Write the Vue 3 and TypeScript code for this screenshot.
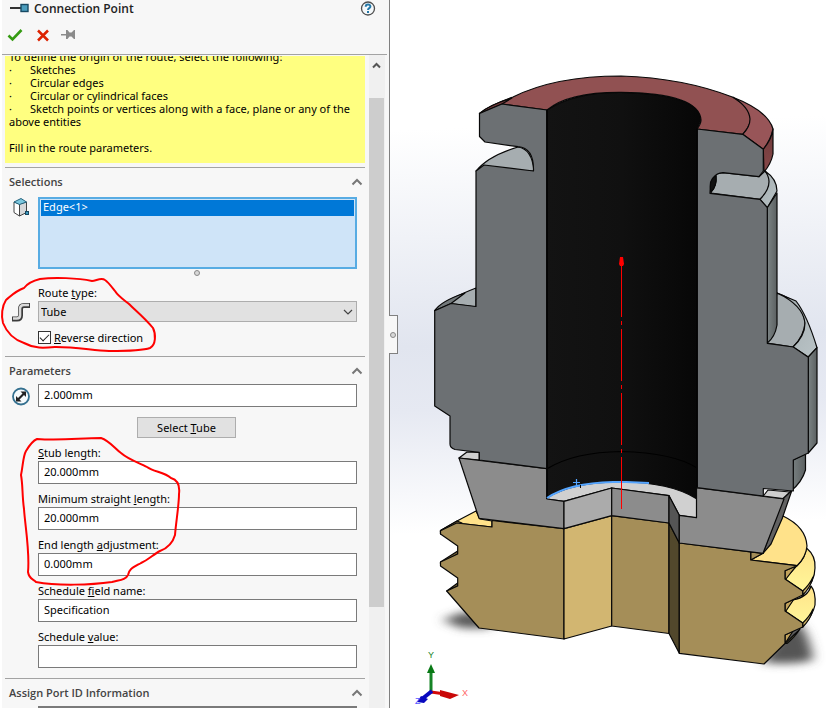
<script setup lang="ts">
import { reactive, ref } from 'vue'

interface Field {
  id: string
  before: string
  key: string
  after: string
  value: string
}

const routeType = ref('Tube')
const reverse = ref(true)
const diameter = ref('2.000mm')
const fields = reactive<Field[]>([
  { id: 'stub', before: '', key: 'S', after: 'tub length:', value: '20.000mm' },
  { id: 'straight', before: 'Minimum straight ', key: 'l', after: 'ength:', value: '20.000mm' },
  { id: 'adjust', before: 'End length ', key: 'a', after: 'djustment:', value: '0.000mm' },
  { id: 'schedule-name', before: 'Schedule ', key: 'f', after: 'ield name:', value: 'Specification' },
  { id: 'schedule-value', before: 'Schedule ', key: 'v', after: 'alue:', value: '' },
])
const hints = ['Sketches', 'Circular edges', 'Circular or cylindrical faces']
</script>

<template>
  <main class="app">
    <aside class="panel">
      <header class="head">
        <div class="title-row">
          <svg class="title-icon" width="20" height="12" viewBox="0 0 20 12">
            <path d="M1 5H12" stroke="#333" stroke-width="2" />
            <rect x="12" y="1.500" width="7" height="7" fill="#4b9dbd" stroke="#174963" stroke-width="1.400" />
          </svg>
          <h1>Connection Point</h1>
          <button class="plain help" aria-label="Help">
            <svg width="16" height="16" viewBox="0 0 16 16">
              <circle cx="8" cy="7.500" r="6.500" fill="#f4f8fa" stroke="#4e4e4e" stroke-width="1.300" />
              <path d="M5.700 5.800C5.700 2.800 10.400 2.800 10.400 5.500C10.400 7.100 8 7.100 8 9" fill="none" stroke="#2478a8" stroke-width="2" />
              <rect x="7" y="10" width="2" height="2" fill="#2478a8" />
            </svg>
          </button>
        </div>
        <div class="actions">
          <button class="plain" aria-label="OK">
            <svg width="16" height="14" viewBox="0 0 16 14"><path d="M1.500 7.500L5.500 11.500L14.500 2" fill="none" stroke="#359b12" stroke-width="2.600" /></svg>
          </button>
          <button class="plain" aria-label="Cancel">
            <svg width="16" height="14" viewBox="0 0 16 14"><path d="M4 2.500L14 12.500M14 2.500L4 12.500" fill="none" stroke="#dd2200" stroke-width="2.500" /></svg>
          </button>
          <button class="plain" aria-label="Keep visible">
            <svg width="16" height="14" viewBox="0 0 16 14"><path d="M0 6H5V2H6.500L8.500 4.500H10.500L13 2H14V11H13L10.500 8.500H8.500L6.500 11H5V7.500H0Z" fill="#8b8b8b" /></svg>
          </button>
        </div>
      </header>

      <div class="body">
        <div class="content">
          <div class="message">
            <p>To define the origin of the route, select the following:</p>
            <p v-for="h in hints" :key="h" class="hint"><span class="bullet">·</span><span>{{ h }}</span></p>
            <p><span class="bullet">·</span>Sketch points or vertices along with a face, plane or any of the above entities</p>
            <p class="spaced">Fill in the route parameters.</p>
          </div>

          <section class="group">
            <h2>Selections
              <button class="plain" aria-label="Collapse Selections"><svg width="12" height="8" viewBox="0 0 12 8"><path d="M1.500 6.500L6 2L10.500 6.500" fill="none" stroke="#777" stroke-width="2" /></svg></button>
            </h2>
            <div class="row">
              <svg class="row-icon" width="18" height="20" viewBox="0 0 18 20">
                <path d="M2 5L7.500 7V19L2 15.500Z" fill="#fff" stroke="#444" />
                <path d="M7.500 7L14.500 5V15.500L7.500 19Z" fill="#d6d8da" stroke="#444" />
                <path d="M2 5L9 1.500L14.500 5L7.500 7.500Z" fill="#7cc8df" stroke="#25637d" />
                <rect x="13.500" y="14.500" width="3" height="3" fill="#3e99bd" stroke="#174963" />
              </svg>
              <ul class="listbox" role="listbox" aria-label="Selected entities">
                <li role="option" aria-selected="true">Edge&lt;1&gt;</li>
              </ul>
            </div>
            <div class="grip"><i></i></div>
            <label class="caption" for="route">Route <u>t</u>ype:</label>
            <div class="row center">
              <svg class="row-icon" width="18" height="20" viewBox="0 0 18 20">
                <path d="M0 17H5Q8.500 17 8.500 13.500V7Q8.500 3.500 12 3.500H18" fill="none" stroke="#3c3c3c" stroke-width="5" />
                <path d="M1 16.500H5Q8 16.500 8 13.500V7Q8 3 12 3H17" fill="none" stroke="#dadada" stroke-width="2.600" />
              </svg>
              <div class="select-wrap">
                <select id="route" v-model="routeType"><option>Tube</option></select>
                <svg class="chevron" width="10" height="6" viewBox="0 0 10 6"><path d="M1 1L5 5L9 1" fill="none" stroke="#444" stroke-width="1.200" /></svg>
              </div>
            </div>
            <label class="check"><input v-model="reverse" type="checkbox" /><span><u>R</u>everse direction</span></label>
          </section>

          <section class="group">
            <h2>Parameters
              <button class="plain" aria-label="Collapse Parameters"><svg width="12" height="8" viewBox="0 0 12 8"><path d="M1.500 6.500L6 2L10.500 6.500" fill="none" stroke="#777" stroke-width="2" /></svg></button>
            </h2>
            <div class="row center">
              <svg class="row-icon" width="18" height="20" viewBox="0 0 18 20">
                <circle cx="9" cy="10.500" r="8" fill="#f5fafc" stroke="#34708f" stroke-width="1.800" />
                <path d="M4 15.500V10L6 12L10.500 7.500L8.500 5.500H14V11L12 9L7.500 13.500L9.500 15.500Z" fill="#222" />
              </svg>
              <input v-model="diameter" class="text" aria-label="Diameter" />
            </div>
            <button class="select-tube">Select <u>T</u>ube</button>
            <div v-for="f in fields" :key="f.id" class="field">
              <label class="caption" :for="f.id">{{ f.before }}<u>{{ f.key }}</u>{{ f.after }}</label>
              <input :id="f.id" v-model="f.value" class="text" />
            </div>
          </section>

          <section class="group">
            <h2>Assign Port ID Information
              <button class="plain" aria-label="Collapse Assign Port ID Information"><svg width="12" height="8" viewBox="0 0 12 8"><path d="M1.500 6.500L6 2L10.500 6.500" fill="none" stroke="#777" stroke-width="2" /></svg></button>
            </h2>
            <input class="text port" aria-label="Port ID" />
          </section>
        </div>
        <div class="scrollbar">
          <svg class="scroll-up" width="10" height="8" viewBox="0 0 10 8"><path d="M1 6.500L4.500 3L8 6.500" fill="none" stroke="#555" stroke-width="2" /></svg>
          <div class="thumb"></div>
        </div>
      </div>

      <button class="flyout" aria-label="Toggle panel"><i></i></button>

      <svg class="markup" width="200" height="600" viewBox="0 0 200 600">
        <path d="M105 280C101 277 96 281 92 281C78 278 54 277 40 279C32 281 27 284 24 288C15 291 10 297 6 300C2 306 1 316 3 323C7 333 15 340 24 343C35 349 44 348 56 347C76 347 91 350 109 351C125 351 142 351 150 348C156 345 156 334 153 328C145 318 134 309 129 304C124 300 118 296 115 291C111 286 108 282 105 280Z" />
        <path d="M37 439C61 441 80 438 101 438C110 441 115 449 121 453C129 460 140 463 147 467C154 472 164 472 171 478C178 480 180 486 179 494C179 505 176 522 175 535C173 542 168 548 160 551C154 554 148 560 141 563C132 568 129 569 128 575C126 580 119 580 112 582C91 585 57 586 36 582C33 579 29 579 28 572C30 552 25 525 24 509C22 495 23 486 21 475C23 466 23 456 26 451C29 446 32 441 37 439Z" />
      </svg>
    </aside>

    <section class="viewport" aria-label="Model view">
      <svg class="model" viewBox="390 0 436 708" preserveAspectRatio="xMidYMin meet">
        <defs>
          <linearGradient id="bore" x1="547" x2="697" y1="0" y2="0" gradientUnits="userSpaceOnUse">
            <stop offset="0" stop-color="#131313" /><stop offset=".5" stop-color="#101010" /><stop offset="1" stop-color="#070707" />
          </linearGradient>
          <linearGradient id="side" x1="0" x2="1" y1="0" y2="0"><stop offset="0" stop-color="#7b8384" /><stop offset="1" stop-color="#5b6061" /></linearGradient>
          <linearGradient id="pale" x1="0" x2="1" y1="0" y2="1"><stop offset="0" stop-color="#a2abae" /><stop offset="1" stop-color="#b9c3c6" /></linearGradient>
          <linearGradient id="redside" x1="0" x2="0" y1="0" y2="1"><stop offset="0" stop-color="#6e3a3b" /><stop offset="1" stop-color="#874849" /></linearGradient>
          <linearGradient id="yellow" x1="0" x2="0" y1="0" y2="1"><stop offset="0" stop-color="#ffe28a" /><stop offset="1" stop-color="#fff99a" /></linearGradient>
          <filter id="soft" x="-40%" y="-60%" width="180%" height="220%"><feGaussianBlur stdDeviation="6 4" /></filter>
        </defs>

        <g filter="url(#soft)">
          <path d="M442 620L464 612L490 616V628H462Z" fill="#555" />
          <path d="M762 662L790 618L803 628Q811 642 813 660Q790 666 762 662Z" fill="#555" />
        </g>

        <g stroke="#080808" stroke-width="1.200" stroke-linejoin="round">
          <!-- rear thread turns -->
          <path d="M785 643.500L797 632L800 629Q795 637 787 643.500Z" fill="#fff99a" />
          <path d="M811 586Q816 592 815 605Q813 615 802.700 627V623L785 611L793 600Q808 597 811 586Z" fill="url(#yellow)" />
          <path d="M806.500 548Q816 556 815 568Q815 581 802.700 595V591L785 579L797 565.700Q805 559 806.500 548Z" fill="url(#yellow)" />
          <path d="M783 516Q806 527 807 546Q806 557 797 565.700L750.700 560L763 553.300Z" fill="#ffe28a" />
          <path d="M750.700 552L763 553.300L750.700 560Z" fill="#a58e58" />
          <path d="M785 570.700L796 566L786 579H785ZM785 603.500L794 599L786 611H785ZM785 635L793 631L785 643.500Z" fill="#c2a35c" />
          <path d="M802.700 591Q810 584 813 577Q811 587 802.700 595ZM802.700 623Q810 616 813 609Q811 619 802.700 627Z" fill="#c7ad63" />

          <!-- front thread body -->
          <path d="M440.500 530.500L457 521L476 511L480 519L492 521V527L457 523L440.500 534Z" fill="#ffe28a" />
          <path d="M440.500 530.500L457 521L462 523L440.500 532ZM440.500 562L457.700 551V554L440.500 564ZM446.700 591L457.700 583V586Z" fill="#756338" />
          <path d="M440.500 530.700L456.700 523L492 527V520.500L564 528.700V639L479 628L446.700 591L457.700 586V578L440.500 566V562L457.700 554V546L440.500 534Z" fill="#a58e58" />
          <path d="M564 528.700L611.700 515.700V626L564 639Z" fill="#d2b671" />
          <path d="M611.700 515.700L669 523V633.500L611.700 626Z" fill="#a58e58" />
          <path d="M669 523L679.300 543V653.300L669 633.500Z" fill="#52482c" />
          <path d="M679.300 543L750.700 552V560L797 565.700L785 570.700V579L802.700 591V595L785 603.500V611L802.700 623V627L785 635V643.500L764 664L679.300 653.300Z" fill="#a58e58" />

          <!-- bore and tube seat -->
          <path d="M547 110Q574 92 621 92.300Q702 95 701 120L697 129V499H547Z" fill="url(#bore)" />
          <path d="M547 468.700Q575 452 621 451.500Q674 453 697 468" fill="none" stroke="#000" />
          <path d="M547 498Q572 482 621 482Q670 482 697 499V518L679.300 515.300L669 495.700L611.700 488L564 501.300L547 499Z" fill="#d0d0d0" />

          <!-- collar -->
          <path d="M459 458L467 452L479.300 452.300V460Z" fill="#cfcfcf" />
          <path d="M459 458L547 468.700V499L564 501.300V528.700L479 518.300Z" fill="#8c8c8c" />
          <path d="M564 501.300L611.700 488V515.700L564 528.700Z" fill="#ababab" />
          <path d="M611.700 488L669 495.700V523L611.700 515.700Z" fill="#8c8c8c" />
          <path d="M669 495.700L679.300 515.300V543L669 523Z" fill="#555" />
          <path d="M783 498.500L792 490L782 519L771 544L763 553.300Z" fill="#626262" />
          <path d="M679.300 515.300L696.500 517.700V487.700L784 499L763 553.300L679.300 543Z" fill="#8c8c8c" />
          <path d="M763.300 496L768 490L790 492L783 498.500Z" fill="#cfcfcf" />

          <!-- red rim -->
          <path d="M479.500 113.500Q490 105 513 97Q555 76 621 76Q684 78 733 97.300Q754 110 750 123Q748 129 742.700 134.300L697 129Q701 124 701 120Q699 93 621 92.300Q568 92 547 110L502 104Z" fill="#915152" />
          <path d="M479.500 113.500Q489 105 512 98L502 104Z" fill="#703a3a" />
          <path d="M733 97.300Q768 111 773 129Q771 139 763.300 149.300L742.700 134.300Q750 127 750 119Q749 107 733 97.300Z" fill="#985558" />
          <path d="M763.300 149.300Q772 139 773 129V154Q771 164 764 172Z" fill="url(#redside)" />

          <!-- left body -->
          <path d="M476 171Q488 156 518 147Q532 149 534 171Z" fill="#a6adb0" />
          <path d="M434.700 310.700Q445 300 476 288V307L451 303.500Z" fill="#a6adb0" />
          <path d="M434.700 310.700Q441 301 465 293L451 303.500Z" fill="#73797b" />
          <path d="M479.500 113.500L502 104L547 110V468.700L479.300 460V452.300L455 449.500Q450 448 450 444V416L434.700 406V310.700L451 303.500L476 306.500V171L484 165L533.500 171Q534 148 518 146.700L485 142L479.500 136.500Z" fill="#6c7073" />

          <!-- right body -->
          <path d="M777 293Q803 302 805 323Q804 336 793 347L767.300 343Z" fill="#a6adb0" />
          <path d="M777 293L796 301Q807 315 817 347.700L808.300 357L793 347Q805 336 805 323Q803 305 777 293Z" fill="url(#pale)" />
          <path d="M808.300 357L817 347.700V443L808.300 453Z" fill="url(#side)" />
          <path d="M793.300 460L805.500 454V470Q802 482 791 491Z" fill="url(#side)" />
          <path d="M711 193V182Q713 173 723 172.700L759 176.700L765 171Q777 184 760 199.300Z" fill="#a6adb0" />
          <path d="M711 192Q708 179 716 176Q717 186 711 192Z" fill="#111" />
          <path d="M765 171Q777 179 777 191L767.300 207.700L760 199.300Q775 184 765 171Z" fill="url(#pale)" />
          <path d="M767.300 207.700L777 193V325Q775 337 767.300 343Z" fill="url(#side)" />
          <path d="M697 129L742.700 134.300L763.300 149.300V171L759 176.700L723 172.700Q710 173 710 193.300L760 199.300L767.300 207.700V343.300L793.300 347L808.300 357.300V453L793.300 460V491L763.300 488.500V496L697 487.700Z" fill="#6c7073" />
          <!-- groove end behind the cut face -->
          <path d="M711 192Q708 180 716 175.500Q717 186 711 192Z" fill="#111" />
        </g>

        <path d="M547 110V499M697 129V487" stroke="#050505" stroke-width="1.800" />
        <path d="M547 498Q569 483 613 482H626L649 483" fill="none" stroke="#55a5ff" stroke-width="2" />
        <path d="M573 482.500H580M576.500 479V486" stroke="#55a5ff" stroke-width="1.200" />
        <path d="M580.500 485V488" stroke="#080808" />
        <path d="M621.500 264V317M621.500 321V325M621.500 329V381M621.500 385V389M621.500 393V445M621.500 449V453M621.500 457V509" stroke="#f00" />
        <path d="M620 257H623L624 264L623 266H620L619 264Z" fill="#f00" />

        <g font-family="Liberation Sans, sans-serif" font-size="9">
          <path d="M431 692V672" stroke="#168426" stroke-width="3" />
          <path d="M431 664L435 673H427Z" fill="#087915" />
          <path d="M431 692L445 694" stroke="#d30808" stroke-width="3" />
          <path d="M440 690L459 695L450 699L440 696Z" fill="#c90808" />
          <path d="M432 691L422 699" stroke="#0808bf" stroke-width="4" />
          <path d="M417 702L421 696L428 699L424 703Z" fill="#0808bf" />
          <text x="428" y="658" fill="#168426">Y</text>
          <text x="462" y="696" fill="#f66">X</text>
          <text x="415" y="704" fill="#55f">Z</text>
        </g>
      </svg>
    </section>
  </main>
</template>

<style>
body {
  margin: 0;
}
</style>

<style scoped>
* {
  box-sizing: border-box;
}
.app {
  display: grid;
  grid-template-columns: 390fr 436fr;
  height: 100vh;
  overflow: hidden;
  font: 11px/13px "Noto Sans", sans-serif;
  color: #000;
}
.panel {
  position: relative;
  display: flex;
  flex-direction: column;
  min-width: 0;
  min-height: 0;
  border-left: 2px solid #fff;
  border-right: 1px solid #808080;
  background: #f7f7f7;
}
.plain {
  display: flex;
  padding: 0;
  border: 0;
  background: none;
}
svg {
  display: block;
}
.head {
  flex: none;
  height: 55px;
  margin-right: 2px;
  border-bottom: 1px solid #a3a3a3;
}
.title-row {
  display: flex;
  align-items: center;
  gap: 5px;
  height: 17px;
  padding: 0 11px 0 7px;
}
h1 {
  margin: 0;
  font: 600 12px/13px "Open Sans", sans-serif;
  color: #222;
}
.help {
  margin-left: auto;
}
.actions {
  display: flex;
  gap: 11px;
  padding: 11px 5px;
}
.body {
  display: flex;
  flex: 1;
  min-height: 0;
  padding: 0 4px 0 3px;
  overflow: hidden;
}
.content {
  display: flex;
  flex: 1;
  flex-direction: column;
  gap: 4px;
  min-width: 0;
  padding-top: 1px;
}
.message {
  display: flex;
  flex: none;
  flex-direction: column;
  justify-content: flex-end;
  height: 107px;
  padding: 0 4px 9px;
  overflow: hidden;
  background: #ffff80;
}
.message p {
  flex: none;
  margin: 0;
}
.message .hint {
  display: flex;
}
.message .spaced {
  margin-top: 13px;
}
.bullet {
  display: inline-block;
  width: 21px;
}
.group {
  flex: none;
  height: 185px;
  padding: 0 8px 0 33px;
  border-top: 1px solid #a3a3a3;
}
.group + .group {
  height: 318px;
}
.group h2 {
  display: flex;
  align-items: center;
  justify-content: space-between;
  height: 27px;
  margin: 0 -6px 0 -29px;
  font: 600 11px/13px "Open Sans", sans-serif;
  color: #444;
}
.row {
  display: flex;
  gap: 8px;
  margin: 0 0 0 -26px;
}
.center {
  align-items: center;
}
.row-icon {
  flex: none;
}
.row > .row-icon {
  margin-top: 2px;
}
.center > .row-icon {
  margin-top: 0;
}
.listbox {
  flex: 1;
  height: 72px;
  margin: 2px 0 0;
  padding: 1px;
  border: 2px solid #58ace3;
  background: #cfe4f8;
  list-style: none;
}
.listbox li {
  padding: 0 2px 3px;
  background: #0078d7;
  color: #fff;
}
.grip {
  display: flex;
  justify-content: center;
  height: 9px;
  padding: 1px 2px 0 0;
}
.grip i,
.flyout i {
  width: 6px;
  height: 6px;
  border: 1px solid #888;
  border-radius: 50%;
  background: #d8d8d8;
}
.caption {
  display: block;
  padding-top: 7px;
  line-height: 16px;
}
.grip + .caption {
  padding-top: 6px;
  line-height: 17px;
}
.select-wrap {
  display: flex;
  position: relative;
  flex: 1;
}
select {
  width: 100%;
  height: 21px;
  padding: 0 2px;
  border: 1px solid #adadad;
  border-radius: 0;
  appearance: none;
  background: #e1e1e1;
  color: #000;
  font: inherit;
}
.chevron {
  position: absolute;
  right: 4px;
  top: 8px;
}
.check {
  display: flex;
  align-items: center;
  gap: 3px;
  height: 30px;
}
.check input {
  display: grid;
  width: 13px;
  height: 13px;
  margin: 0;
  border: 1px solid #333;
  appearance: none;
  background: #fff;
}
.check input:checked::after {
  width: 8px;
  height: 4px;
  margin: 2px 1px;
  border: solid #222;
  border-width: 0 0 1px 1px;
  content: "";
  transform: rotate(-45deg);
}
.text {
  display: block;
  width: 100%;
  height: 23px;
  padding: 0 5px 3px;
  border: 1px solid #7a7a7a;
  border-radius: 0;
  background: #fff;
  color: #000;
  font: inherit;
}
.port {
  border-top-width: 2px;
}
.select-tube {
  display: block;
  width: 99px;
  height: 21px;
  margin: 10px 0 0 99px;
  padding: 0;
  border: 1px solid #adadad;
  background: #e1e1e1;
  color: #000;
  font: inherit;
}
.scrollbar {
  flex: none;
  width: 16px;
  margin-left: 4px;
  background: #f0f0f0;
}
.scroll-up {
  margin: 6px 3px 29px;
}
.thumb {
  width: 15px;
  height: 78%;
  background: #cdcdcd;
}
.flyout {
  display: flex;
  position: absolute;
  z-index: 2;
  top: 315px;
  right: -9px;
  align-items: center;
  width: 9px;
  height: 39px;
  padding: 0 1px;
  border: 1px solid #808080;
  border-left: 0;
  background: #f7f7f7;
}
.flyout i {
  flex: none;
}
.markup {
  position: absolute;
  top: 0;
  left: -2px;
  pointer-events: none;
}
.markup path {
  fill: none;
  stroke: #f00;
  stroke-width: 2;
}
.viewport {
  min-width: 0;
  background: linear-gradient(176deg, #fff 24%, #fff 26%, #e4e8f1 46%, #e1e5ef 56%, #fff 80%);
  background: linear-gradient(178deg, #fff 18%, #e1e5ef 48%, #e6e9f2 57%, #fff 74%);
}
.model {
  width: 100%;
  height: 100%;
}
</style>
